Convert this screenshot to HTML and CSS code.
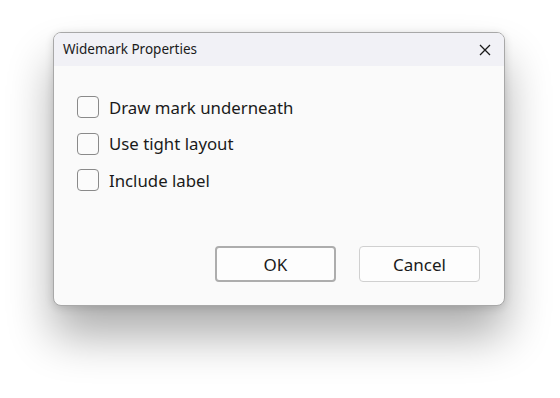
FILE: index.html
```html
<!DOCTYPE html>
<html>
<head>
<meta charset="utf-8">
<link rel="stylesheet" href="styles.css">
</head>
<body>
<div class="dialog">
  <div class="titlebar">
    <span class="title">Widemark Properties</span>
    <span class="close">
      <svg width="12" height="12" viewBox="0 0 12 12"><path d="M1 1 L11 11 M11 1 L1 11" stroke="#1a1a1a" stroke-width="1.3" fill="none"/></svg>
    </span>
  </div>
  <div class="content">
    <label class="check"><span class="box"></span><span>Draw mark underneath</span></label>
    <label class="check"><span class="box"></span><span>Use tight layout</span></label>
    <label class="check"><span class="box"></span><span>Include label</span></label>
  </div>
  <div class="buttons">
    <button class="btn default">OK</button>
    <button class="btn">Cancel</button>
  </div>
</div>
</body>
</html>
```
FILE: styles.css
```css
html, body { margin: 0; padding: 0; background: #ffffff; }
body {
  box-sizing: border-box;
  min-height: 398px;
  padding: 32px 0 0 53px;
  font-family: "Noto Sans", "Open Sans", sans-serif;
  color: #1a1a1a;
}
.dialog {
  width: 450px;
  height: 272px;
  border: 1px solid #a8a8a8;
  border-radius: 8px;
  background: #fafafa;
  box-shadow: 0 30px 46px rgba(0,0,0,0.32), 0 2px 8px rgba(0,0,0,0.14);
  overflow: hidden;
  display: flex;
  flex-direction: column;
}
.titlebar {
  height: 33px;
  background: #f1f1f6;
  display: flex;
  align-items: center;
  justify-content: space-between;
  padding: 0 13px 0 9px;
}
.title { font-size: 13.5px; line-height: 1; margin-top: 1px; }
.close { display: flex; width: 12px; height: 12px; }
.content {
  padding: 30px 0 0 23px;
  display: flex;
  flex-direction: column;
  gap: 14.5px;
  flex: 1;
}
.check { display: flex; align-items: center; gap: 10px; font-size: 16.8px; height: 22px; }
.box {
  width: 20px; height: 20px;
  border: 1px solid #8a8a8a;
  border-radius: 4px;
  background: #fbfbfb;
}
.buttons {
  display: flex;
  justify-content: flex-end;
  gap: 23px;
  padding: 0 24px 23px 0;
}
.btn {
  width: 121px;
  height: 36px;
  border: 1px solid #d0d0d0;
  border-radius: 4px;
  background: #fdfdfd;
  font-family: "Noto Sans", "Open Sans", sans-serif;
  font-size: 17px;
  color: #1a1a1a;
  padding: 0;
}
.btn.default { border: 2px solid #adadad; }
```
